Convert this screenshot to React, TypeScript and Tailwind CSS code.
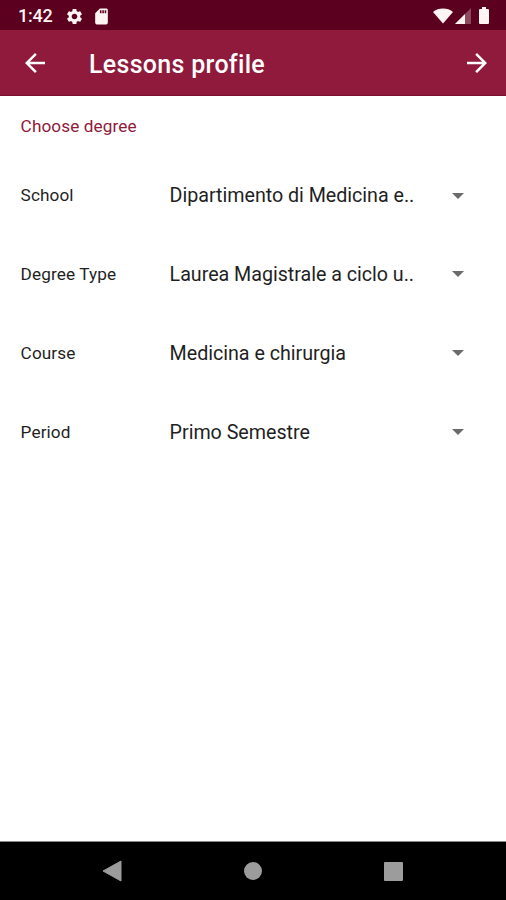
import { MdArrowBack, MdArrowForward, MdSettings, MdSdCard } from "react-icons/md";

const fields = [
  { label: "School", value: "Dipartimento di Medicina e.." },
  { label: "Degree Type", value: "Laurea Magistrale a ciclo u.." },
  { label: "Course", value: "Medicina e chirurgia" },
  { label: "Period", value: "Primo Semestre" },
];

function StatusBar() {
  return (
    <div className="flex h-[30px] items-center bg-[#5c001f] pt-[2px] pl-[18px] pr-[17px] text-[#fff5f5]">
      <span className="w-[47px] text-[18px] leading-none font-medium tracking-[-0.2px]">1:42</span>
      <MdSettings size={19} />
      <MdSdCard size={19} className="ml-[8px]" />
      <div className="ml-auto flex items-center">
        <svg width="20" height="16" viewBox="0 0 20 16" fill="currentColor">
          <path d="M10 15.5 0 4C5-.6 15-.6 20 4z" />
        </svg>
        <svg className="ml-[2px]" width="16" height="16" viewBox="0 0 16 16" fill="currentColor">
          <path d="M0 16 16 0v16z" fillOpacity="0.3" />
          <path d="M0 16 10 6v10z" />
        </svg>
        <svg className="mb-[1px] ml-[8px]" width="10" height="17" viewBox="0 0 10 17" fill="currentColor">
          <path d="M3 0h4v2h2q1 0 1 1v13q0 1-1 1H1q-1 0-1-1V3q0-1 1-1h2z" />
        </svg>
      </div>
    </div>
  );
}

function AppBar() {
  return (
    <header className="flex h-[66px] items-center border-b border-[#7c0f31] bg-[#8f1a3c] pt-[1px] pr-[14px] pl-5 text-white">
      <MdArrowBack size={30} />
      <h1 className="ml-[39px] pt-[3px] text-[25px] font-medium tracking-[0.3px]">Lessons profile</h1>
      <MdArrowForward size={30} className="ml-auto" />
    </header>
  );
}

function Field({ label, value }: { label: string; value: string }) {
  return (
    <div className="flex h-[78.8px] items-center">
      <span className="w-[149px] text-[17.2px] tracking-[0.1px]">{label}</span>
      <span className="w-[282px] text-[19.7px] tracking-[-0.03px] whitespace-nowrap">{value}</span>
      <svg className="mb-[1px]" width="12" height="6" viewBox="0 0 12 6" fill="#6b6b6b">
        <path d="M0 0h12L6 6z" />
      </svg>
    </div>
  );
}

function NavBar() {
  return (
    <nav className="flex h-[59px] border-t border-[#8a8a8a] bg-black pl-[43px]">
      <div className="flex w-[140px] items-center justify-center pr-[2px]">
        <svg width="20" height="22" viewBox="0 0 20 22" fill="#9c9c9c">
          <path d="M19 1v20L1 11z" stroke="#9c9c9c" strokeLinejoin="round" />
        </svg>
      </div>
      <div className="flex w-[140px] items-center justify-center">
        <div className="size-[18px] rounded-full bg-[#9c9c9c]" />
      </div>
      <div className="flex w-[140px] items-center justify-center">
        <div className="size-[19px] rounded-[1px] bg-[#9c9c9c]" />
      </div>
    </nav>
  );
}

export default function App() {
  return (
    <main className="flex h-screen w-full flex-col overflow-hidden bg-white font-['Roboto',sans-serif]">
      <StatusBar />
      <AppBar />
      <section className="flex-1 pt-[17px] pl-[20.6px] text-[#1f1f1f]">
        <h2 className="mb-[17.8px] text-[17.2px] leading-[26px] tracking-[0.1px] text-[#8f1a3c]">Choose degree</h2>
        {fields.map((field) => (
          <Field key={field.label} label={field.label} value={field.value} />
        ))}
      </section>
      <NavBar />
    </main>
  );
}
